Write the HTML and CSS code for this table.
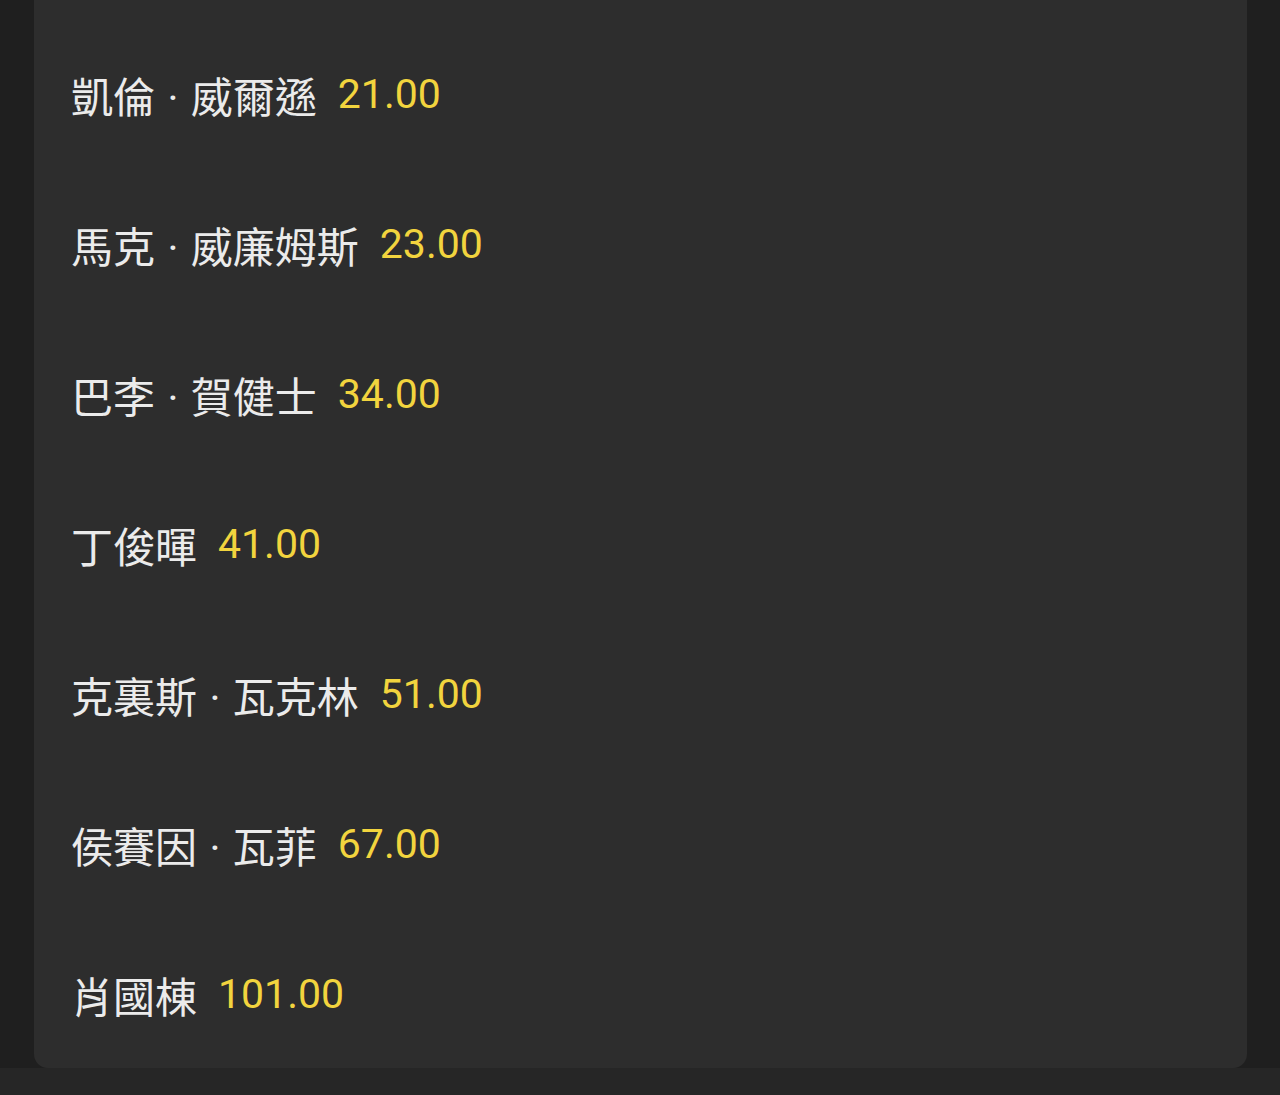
FILE: index.html
```html
<!DOCTYPE html>
<html lang="zh-Hant">
<head>
<meta charset="utf-8">
<link rel="stylesheet" href="styles.css">
</head>
<body>
<div class="page">
  <div class="card">
    <div class="row"><span class="name">凱倫 · 威爾遜</span><span class="score">21.00</span></div>
    <div class="row"><span class="name">馬克 · 威廉姆斯</span><span class="score">23.00</span></div>
    <div class="row"><span class="name">巴李 · 賀健士</span><span class="score">34.00</span></div>
    <div class="row"><span class="name">丁俊暉</span><span class="score">41.00</span></div>
    <div class="row"><span class="name">克裏斯 · 瓦克林</span><span class="score">51.00</span></div>
    <div class="row"><span class="name">侯賽因 · 瓦菲</span><span class="score">67.00</span></div>
    <div class="row"><span class="name">肖國棟</span><span class="score">101.00</span></div>
  </div>
  <div class="strip"></div>
</div>
</body>
</html>
```

FILE: styles.css
```css
html, body {
  margin: 0;
  padding: 0;
  background: #1f1f1f;
}
.page {
  width: 1280px;
  height: 1095px;
  overflow: hidden;
  display: flex;
  flex-direction: column;
}
.card {
  margin: 0 33px 0 34px;
  padding-top: 19px;
  height: 1049px;
  background: #2d2d2d;
  border-radius: 0 0 14px 14px;
  display: flex;
  flex-direction: column;
}
.row {
  height: 150px;
  flex: none;
  display: flex;
  align-items: center;
  padding-left: 37px;
  gap: 21px;
}
.name {
  color: #ebebeb;
  font-size: 42px;
  font-family: Roboto, "Noto Sans CJK TC", "Noto Sans CJK SC", sans-serif;
  word-spacing: 2px;
}
.score {
  color: #f2d43e;
  font-size: 41px;
  font-family: Roboto, "Noto Sans", sans-serif;
}
.strip {
  flex: 1;
  background: #262626;
}
```
